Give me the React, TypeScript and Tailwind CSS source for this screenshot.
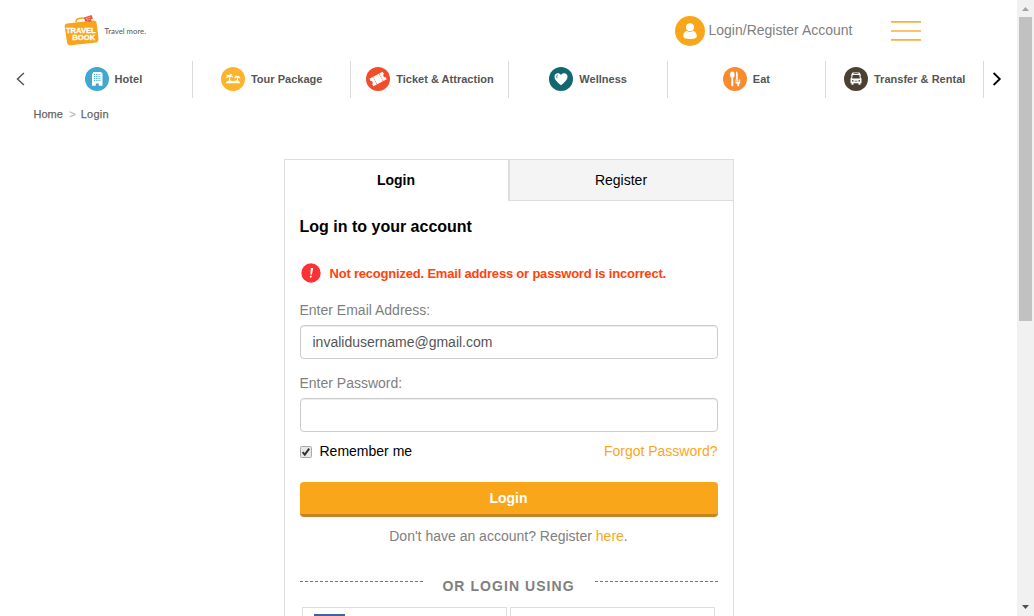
import React from 'react';

function HotelIcon() {
  return (
    <svg viewBox="0 0 24 24" className="-mt-px h-6 w-6 shrink-0">
      <circle cx="12" cy="12" r="12" fill="#43a8cf" />
      <path d="M8 5h8.500v1.500h1V18.800h-3.700V16.500h-3v2.300H7V6.500h1z" fill="#fff" />
      <path d="M9 7.500h6.500M9 9.500h6.500M9 11.500h6.500M9 13.500h6.500" stroke="#43a8cf" strokeWidth="1" strokeDasharray="1 .8" />
    </svg>
  );
}

function TourIcon() {
  return (
    <svg viewBox="0 0 24 24" className="-mt-px h-6 w-6 shrink-0">
      <circle cx="12" cy="12" r="12" fill="#fbb42c" />
      <g fill="#fff">
        <path d="M4.500 11.200c.2-1.300 1-1.900 2-2-.6-.5-1.200-.5-1.700-.2.700-1.400 2.300-1.600 3.300-.6.800-1.500 2.300-1.700 3.500-.8-.8 0-1.300.3-1.600.8 1.300 0 2.100.9 2 2.300-.7-.8-1.500-1.200-2.500-1-.3 1.600-.5 2.900-.1 4.500H7.800c0-1.700.2-3 .7-4.300-1.500.1-2.600.6-4 1.300z" />
        <path d="M13 11.600c0-1.300.8-2 1.700-2.100-.2-.5-.6-.7-1.100-.7 1.100-.7 2-.4 2.600.5.800-.8 1.900-.8 2.700 0-.5 0-.9.200-1.100.5 1.100.2 1.700 1 1.400 2.200-.5-.8-1.200-1.200-2-1.200-.3 1-.2 2 .1 3.300h-1.500c-.2-1.100 0-2.100.4-3.200-1.200-.2-2.200 0-3.200.7z" />
        <path d="M5 16.200c0-1.700 1.800-2.600 3.700-2.600 1.700 0 2.300.7 3.500.7s2-.7 3.500-.7c1.900 0 3.300.9 3.300 2.600z" />
      </g>
    </svg>
  );
}

function TicketIcon() {
  return (
    <svg viewBox="0 0 24 24" className="-mt-px h-6 w-6 shrink-0">
      <circle cx="12" cy="12" r="12" fill="#f04e2b" />
      <g transform="rotate(-28 12 12)">
        <path d="M4.500 7.800h15v2.500a1.800 1.800 0 0 0 0 3.500v2.500h-15v-2.500a1.800 1.800 0 0 0 0-3.500z" fill="#fff" />
        <path d="M8.500 8v8M15.500 8v8" stroke="#f04e2b" strokeWidth=".6" strokeDasharray="1.500 .7" />
      </g>
    </svg>
  );
}

function WellnessIcon() {
  return (
    <svg viewBox="0 0 24 24" className="-mt-px h-6 w-6 shrink-0">
      <circle cx="12" cy="12" r="12" fill="#136870" />
      <path d="M12 18.200C8.500 15.300 5.500 12.800 5.500 9.700c0-2.200 1.500-3.500 3.300-3.500 1.300 0 2.500.6 3.200 1.900.7-1.300 1.900-1.900 3.200-1.900 1.800 0 3.300 1.300 3.300 3.500 0 3.100-3 5.600-6.500 8.500z" fill="#fff" />
      <path d="M8.900 7.800c-1.300.5-1.500 2-.8 3.300" fill="none" stroke="#136870" strokeWidth=".8" />
    </svg>
  );
}

function EatIcon() {
  return (
    <svg viewBox="0 0 24 24" className="-mt-px h-6 w-6 shrink-0">
      <circle cx="12" cy="12" r="12" fill="#f98b2f" />
      <g fill="#fff">
        <ellipse cx="9.300" cy="7.800" rx="2.200" ry="3.200" />
        <path d="M8.600 10H10l.4 8.200a1.100 1.100 0 0 1-2.200 0z" />
        <path d="M13 4.500c1.300 0 1.800 1.800 1.800 3.500v4.500H13z" />
        <path d="M12.500 12.500h1v2.500h.8v-2.500h1.100v2.500h.8v-2.500h1v3.200c0 .7-.4 1-1.100 1.100v2.400h-1.700v-2.400c-1.300-.1-1.900-.4-1.900-1.100z" />
      </g>
    </svg>
  );
}

function TransferIcon() {
  return (
    <svg viewBox="0 0 24 24" className="-mt-px h-6 w-6 shrink-0">
      <circle cx="12" cy="12" r="12" fill="#4a4133" />
      <path d="M8.500 5.500h7l1.200 2v3.800h.8v4.900h-1v1.600h-2v-1.600h-5v1.600h-2v-1.600h-1v-4.900h.8V7.500z" fill="#fff" />
      <path d="M8.700 8h6.600l.6 3.500H8.100zM9.500 6.300h5v.7h-5z" fill="#4a4133" />
      <circle cx="8.800" cy="13.900" r=".8" fill="#4a4133" />
      <circle cx="15.200" cy="13.900" r=".8" fill="#4a4133" />
      <path d="M10.500 14.200h3" stroke="#4a4133" strokeWidth=".7" />
    </svg>
  );
}

const categories = [
  { label: 'Hotel', Icon: HotelIcon },
  { label: 'Tour Package', Icon: TourIcon },
  { label: 'Ticket & Attraction', Icon: TicketIcon },
  { label: 'Wellness', Icon: WellnessIcon },
  { label: 'Eat', Icon: EatIcon },
  { label: 'Transfer & Rental', Icon: TransferIcon },
];

function Logo() {
  return (
    <svg viewBox="0 0 90 34" className="h-[34px] w-[90px]">
      <path d="M13 8.500C13 6 14 4.800 16 4.400l4-.5c2.500-.2 4 1 4.500 3.600" fill="none" stroke="#f9a51b" strokeWidth="1.500" />
      <path d="M4 9.500 30 6.500c2.300-.2 3.500 1 3.700 3l1.800 15.500c.2 2-.8 3.300-2.700 3.600L8 31.300c-2.300.3-3.700-.8-4-3L1.700 13c-.3-2 .6-3.300 2.300-3.500z" fill="#f9a51b" />
      <path d="M21 3.600 28.500 1l1.500 3.700-2 .5.500 2.500-6.300-.3z" fill="#ee5540" />
      <path d="m23 4.500 4.500-1.500M24 6.200l3.500-1" stroke="#fff" strokeWidth=".7" strokeDasharray="1 .7" />
      <text x="3" y="18.700" textLength="29.500" lengthAdjust="spacingAndGlyphs" fill="#fff" stroke="#fff" strokeWidth=".3" fontFamily="Liberation Sans, sans-serif" fontWeight="700" fontSize="7.600">TRAVEL</text>
      <text x="9.200" y="25.600" textLength="23" lengthAdjust="spacingAndGlyphs" fill="#fff" stroke="#fff" strokeWidth=".3" fontFamily="Liberation Sans, sans-serif" fontWeight="700" fontSize="7.400">BOOK</text>
      <text x="41.500" y="20" textLength="41.500" lengthAdjust="spacingAndGlyphs" fill="#555" fontFamily="Lato, sans-serif" fontSize="7.800">Travel more.</text>
    </svg>
  );
}

function Header() {
  return (
    <header className="flex h-[61px] items-start pl-[63px]">
      <div className="mt-[14px]"><Logo /></div>
      <a className="mt-[15px] ml-[522px] flex h-[31px] items-center text-[14px] text-[#808080]">
        <svg viewBox="0 0 30 30" className="mr-[3.5px] h-[30px] w-[30px]">
          <circle cx="15" cy="15" r="15" fill="#faa61a" />
          <circle cx="15" cy="11.200" r="4" fill="#fff" />
          <path d="M8.200 20.500c0-3.400 2-5.500 4-5.500.8.800 1.800 1.100 2.800 1.100s2-.3 2.800-1.100c2 0 4 2.100 4 5.500 0 1.700-3.300 2.500-6.800 2.500s-6.800-.8-6.800-2.500z" fill="#fff" />
        </svg>
        <span className="whitespace-nowrap">Login/Register Account</span>
      </a>
      <svg viewBox="0 0 30 20" className="mt-[21px] ml-[38.7px] h-[20px] w-[30px]">
        <path d="M0 .9h30M0 10h30M0 18.900h30" stroke="#fbb03b" strokeWidth="1.700" />
      </svg>
    </header>
  );
}

function CategoryBar() {
  return (
    <nav className="flex h-[37px] items-start">
      <svg viewBox="0 0 10 14" className="mt-[11px] ml-[15px] h-[14px] w-[10px]">
        <path d="M8.900 1 2.500 7l6.400 6" fill="none" stroke="#555" strokeWidth="1.500" />
      </svg>
      <ul className="ml-[9.5px] grid h-[37px] w-[949.5px] grid-cols-6">
        {categories.map(({ label, Icon }) => (
          <li key={label} className="flex items-center justify-center gap-[6px] border-r border-[#dadada] pl-[0.6px] text-[11px] font-bold tracking-[0.02px] whitespace-nowrap text-[#555]">
            <Icon />
            <span>{label}</span>
          </li>
        ))}
      </ul>
      <svg viewBox="0 0 10 14" className="mt-[11px] ml-[8px] h-[14px] w-[10px]">
        <path d="m1.600 1 6.200 6-6.200 6" fill="none" stroke="#000" strokeWidth="1.800" />
      </svg>
    </nav>
  );
}

function LoginPanel() {
  return (
    <section className="ml-[283.5px] h-[470px] w-[450px] border border-b-0 border-[#dedede]">
      <div className="flex h-[41px] text-[14px] leading-[40px] text-black">
        <div className="w-[223px] text-center font-bold">Login</div>
        <div className="w-[225px] border-b border-l-2 border-[#dedede] bg-[#f4f4f4] text-center">Register</div>
      </div>
      <form className="flex flex-col px-[15px] text-[14px] text-[#808080]" onSubmit={(e) => e.preventDefault()}>
        <h1 className="mt-[14px] h-[24px] text-[16px] leading-[24px] font-bold text-black">Log in to your account</h1>
        <div className="mt-[23px] flex h-[23px] items-center text-[13px] font-bold tracking-[-0.2px] text-[#ff430c]">
          <svg viewBox="0 0 20 20" className="-mt-px mr-[8.6px] ml-[1.400px] h-[20px] w-[20px]">
            <circle cx="10" cy="10" r="9.700" fill="#fb3136" />
            <path d="M9.800 5h2.400l-1.300 6.600H9.400zM9.100 12.700h1.700l-.4 1.900H8.700z" fill="#fff" />
          </svg>
          <span className="whitespace-nowrap">Not recognized. Email address or password is incorrect.</span>
        </div>
        <label className="mt-[15px] h-[20px] leading-[20px]" htmlFor="email">Enter Email Address:</label>
        <input id="email" type="text" defaultValue="invalidusername@gmail.com" className="mt-[5px] h-[34px] rounded-[4px] border border-[#ccc] px-[12px] text-[#555] shadow-[inset_0_1px_1px_rgba(0,0,0,0.075)] outline-none" />
        <label className="mt-[14px] h-[20px] leading-[20px]" htmlFor="password">Enter Password:</label>
        <input id="password" type="password" className="mt-[5px] h-[34px] rounded-[4px] border border-[#ccc] px-[12px] text-[#555] shadow-[inset_0_1px_1px_rgba(0,0,0,0.075)] outline-none" />
        <div className="mt-[9px] flex h-[20px] items-center justify-between leading-[20px]">
          <label className="flex items-center text-black">
            <svg viewBox="0 0 12 12" className="mt-[2px] mr-[8px] h-[12px] w-[12px]">
              <rect x=".5" y=".5" width="11" height="11" rx="1" fill="#e8e8e8" stroke="#aaa" />
              <path d="m2.600 6.200 2.200 2.500 4.400-6" fill="none" stroke="#333" strokeWidth="2" />
            </svg>
            Remember me
          </label>
          <a className="text-[#faa61a]">Forgot Password?</a>
        </div>
        <button className="mt-[21px] h-[35px] rounded-[4px] border-b-[3px] border-[#c58322] bg-[#faa61a] text-[14px] font-bold text-white">Login</button>
        <p className="mt-[9px] h-[20px] text-center leading-[20px]">Don't have an account? Register <a className="text-[#faa61a]">here</a>.</p>
        <div className="mt-[30px] flex h-[20px] justify-between">
          <span className="mt-[5px] h-0 w-[123px] border-t border-dashed border-[#777]" />
          <span className="font-bold tracking-[1.05px] leading-[20px]">OR LOGIN USING</span>
          <span className="mt-[5px] h-0 w-[123px] border-t border-dashed border-[#777]" />
        </div>
        <div className="mt-[11px] flex gap-[3px] pl-[2px]">
          <div className="h-[45px] w-[205px] border border-[#dedede] pt-[6px] pl-[11px]">
            <div className="h-[31px] w-[31px] bg-[#4460a0]" />
          </div>
          <div className="h-[45px] w-[205px] border border-[#dedede]" />
        </div>
      </form>
    </section>
  );
}

function Scrollbar() {
  return (
    <aside className="flex h-full w-[17px] flex-col items-center bg-[#f1f1f1]">
      <svg viewBox="0 0 17 17" className="h-[17px] w-[17px]"><path d="M5 11h7L8.500 7z" fill="#a3a3a3" /></svg>
      <div className="h-[304px] w-[13px] bg-[#c1c1c1]" />
      <svg viewBox="0 0 17 17" className="mt-auto h-[17px] w-[17px]"><path d="M5 6h7l-3.500 4z" fill="#505050" /></svg>
    </aside>
  );
}

export default function App() {
  return (
    <div className="flex h-[616px] w-[1034px] overflow-hidden bg-white font-['Liberation_Sans',sans-serif]">
      <main className="h-full w-[1017px] overflow-hidden">
        <Header />
        <CategoryBar />
        <div className="flex h-[61px] items-start pt-[8px] pl-[33.5px] text-[11px] leading-[16px] text-[#666] [-webkit-text-stroke:0.25px]">
          <span>Home</span>
          <span className="mr-[5px] ml-[6.5px] text-[#bbb]">&gt;</span>
          <span className="tracking-[0.2px]">Login</span>
        </div>
        <LoginPanel />
      </main>
      <Scrollbar />
    </div>
  );
}
